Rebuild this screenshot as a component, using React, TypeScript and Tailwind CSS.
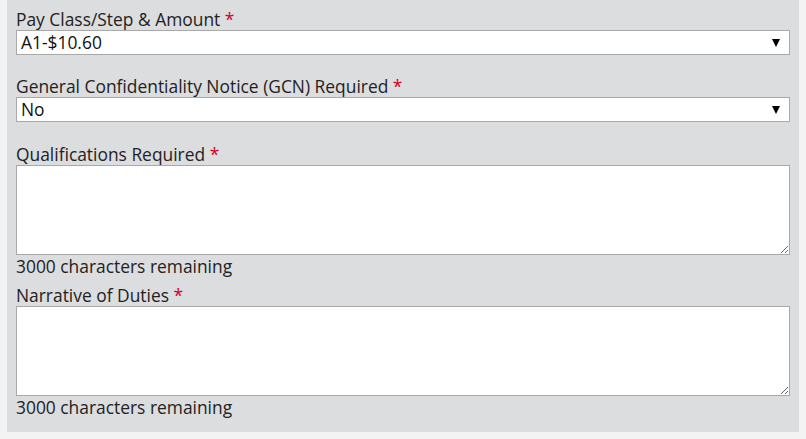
import { ReactNode } from "react";

function Label({ children }: { children: ReactNode }) {
  return (
    <div className="text-[17.4px] leading-[22px] text-[#222]">
      {children} <span className="text-[#d0021b]">*</span>
    </div>
  );
}

function Select({ value }: { value: string }) {
  return (
    <div className="relative h-[25px] border border-[#a9a9a9] bg-white">
      <div className="pl-[4px] text-[17.4px] leading-[23px] text-[#111]">{value}</div>
      <span className="absolute right-[9px] top-[8px] h-0 w-0 border-x-[4px] border-t-[8px] border-x-transparent border-t-black" />
    </div>
  );
}

function TextArea() {
  return (
    <textarea className="block h-[90px] w-full border border-[#a9a9a9] bg-white outline-none" />
  );
}

export default function App() {
  return (
    <div className="h-[439px] w-[806px] bg-[#f3f3f3] font-['Open_Sans',sans-serif]">
      <div className="ml-[7px] w-[792px] bg-[#dcdddf] px-[9px] pb-[14px] pt-[8px]">
        <Label>Pay Class/Step &amp; Amount</Label>
        <Select value="A1-$10.60" />

        <div className="mt-[20px]">
          <Label>General Confidentiality Notice (GCN) Required</Label>
          <Select value="No" />
        </div>

        <div className="mt-[21px]">
          <Label>Qualifications Required</Label>
          <TextArea />
          <div className="text-[17.4px] leading-[22px] text-[#222]">3000 characters remaining</div>
        </div>

        <div className="mt-[7px]">
          <Label>Narrative of Duties</Label>
          <TextArea />
          <div className="text-[17.4px] leading-[22px] text-[#222]">3000 characters remaining</div>
        </div>
      </div>
    </div>
  );
}
